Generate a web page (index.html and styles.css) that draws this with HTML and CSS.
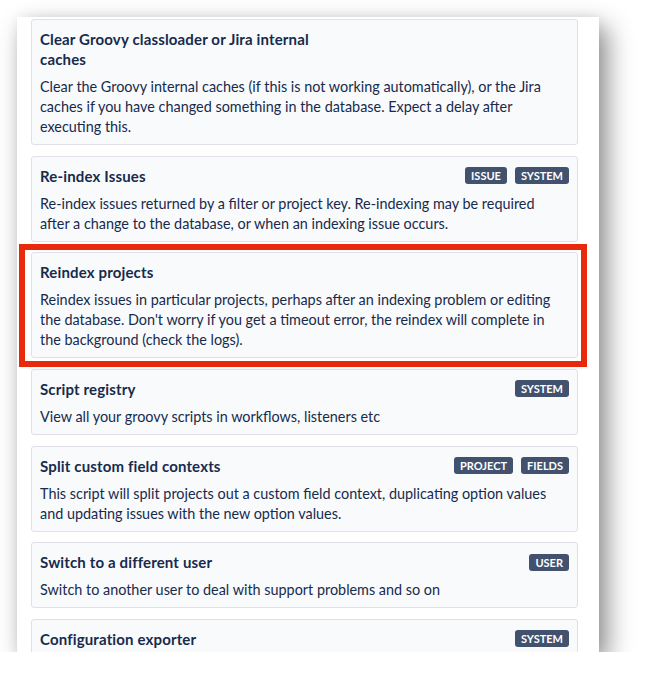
FILE: index.html
```html
<!DOCTYPE html>
<html>
<head>
<meta charset="utf-8">
<link rel="stylesheet" href="styles.css">
</head>
<body>
<div class="panel">
  <div class="list">
    <div class="card">
      <div class="head">
        <div class="title">Clear Groovy classloader or Jira internal caches</div>
      </div>
      <p class="desc">Clear the Groovy internal caches (if this is not working automatically), or the Jira caches if you have changed something in the database. Expect a delay after executing this.</p>
    </div>
    <div class="card">
      <div class="head">
        <div class="title">Re-index Issues</div>
        <div class="tags"><span class="tag">ISSUE</span><span class="tag">SYSTEM</span></div>
      </div>
      <p class="desc">Re-index issues returned by a filter or project key. Re-indexing may be required after a change to the database, or when an indexing issue occurs.</p>
    </div>
    <div class="card highlighted">
      <div class="head">
        <div class="title">Reindex projects</div>
      </div>
      <p class="desc">Reindex issues in particular projects, perhaps after an indexing problem or editing the database. Don't worry if you get a timeout error, the reindex will complete in the background (check the logs).</p>
    </div>
    <div class="card">
      <div class="head">
        <div class="title">Script registry</div>
        <div class="tags"><span class="tag">SYSTEM</span></div>
      </div>
      <p class="desc">View all your groovy scripts in workflows, listeners etc</p>
    </div>
    <div class="card">
      <div class="head">
        <div class="title">Split custom field contexts</div>
        <div class="tags"><span class="tag">PROJECT</span><span class="tag">FIELDS</span></div>
      </div>
      <p class="desc">This script will split projects out a custom field context, duplicating option values and updating issues with the new option values.</p>
    </div>
    <div class="card">
      <div class="head">
        <div class="title">Switch to a different user</div>
        <div class="tags"><span class="tag">USER</span></div>
      </div>
      <p class="desc">Switch to another user to deal with support problems and so on</p>
    </div>
    <div class="card last">
      <div class="head">
        <div class="title">Configuration exporter</div>
        <div class="tags"><span class="tag">SYSTEM</span></div>
      </div>
    </div>
  </div>
</div>
</body>
</html>
```

FILE: styles.css
```css
html, body {
  margin: 0;
  padding: 0;
  background: #ffffff;
}

body {
  font-family: Lato, "Noto Sans", "Liberation Sans", sans-serif;
  color: #172b4d;
  padding: 17px 0 0 17px;
}

.panel {
  width: 582px;
  height: 635px;
  background: #ffffff;
  box-shadow: 8px 10px 24px rgba(0, 0, 0, 0.45), 0 0 12px rgba(0, 0, 0, 0.05);
  overflow: hidden;
  box-sizing: border-box;
  padding: 2px 21px 0 14px;
}

.list {
  display: flex;
  flex-direction: column;
  gap: 10.67px;
}

.card {
  position: relative;
  background: #f9fafc;
  border: 1px solid #dfe1e6;
  border-radius: 3px;
  padding: 9px 8px 7px 8px;
}

.card.last {
  padding-bottom: 20px;
}

.head {
  display: flex;
  justify-content: space-between;
  align-items: center;
}

.title {
  font-weight: 700;
  font-size: 15px;
  letter-spacing: 0.15px;
  line-height: 20px;
  max-width: 52%;
}

.tags {
  display: flex;
  gap: 8px;
}

.tag {
  background: #42526e;
  color: #ffffff;
  font-weight: 700;
  font-size: 11px;
  line-height: 17px;
  height: 17px;
  padding: 0 6px;
  border-radius: 3px;
}

.desc {
  margin: 8px 0 0 0;
  padding-right: 4px;
  font-size: 14.4px;
  line-height: 20px;
}

.highlighted::after {
  content: "";
  position: absolute;
  top: -9px;
  left: -13px;
  right: -10px;
  bottom: -10px;
  border: 6px solid #e8290b;
  pointer-events: none;
}
```
